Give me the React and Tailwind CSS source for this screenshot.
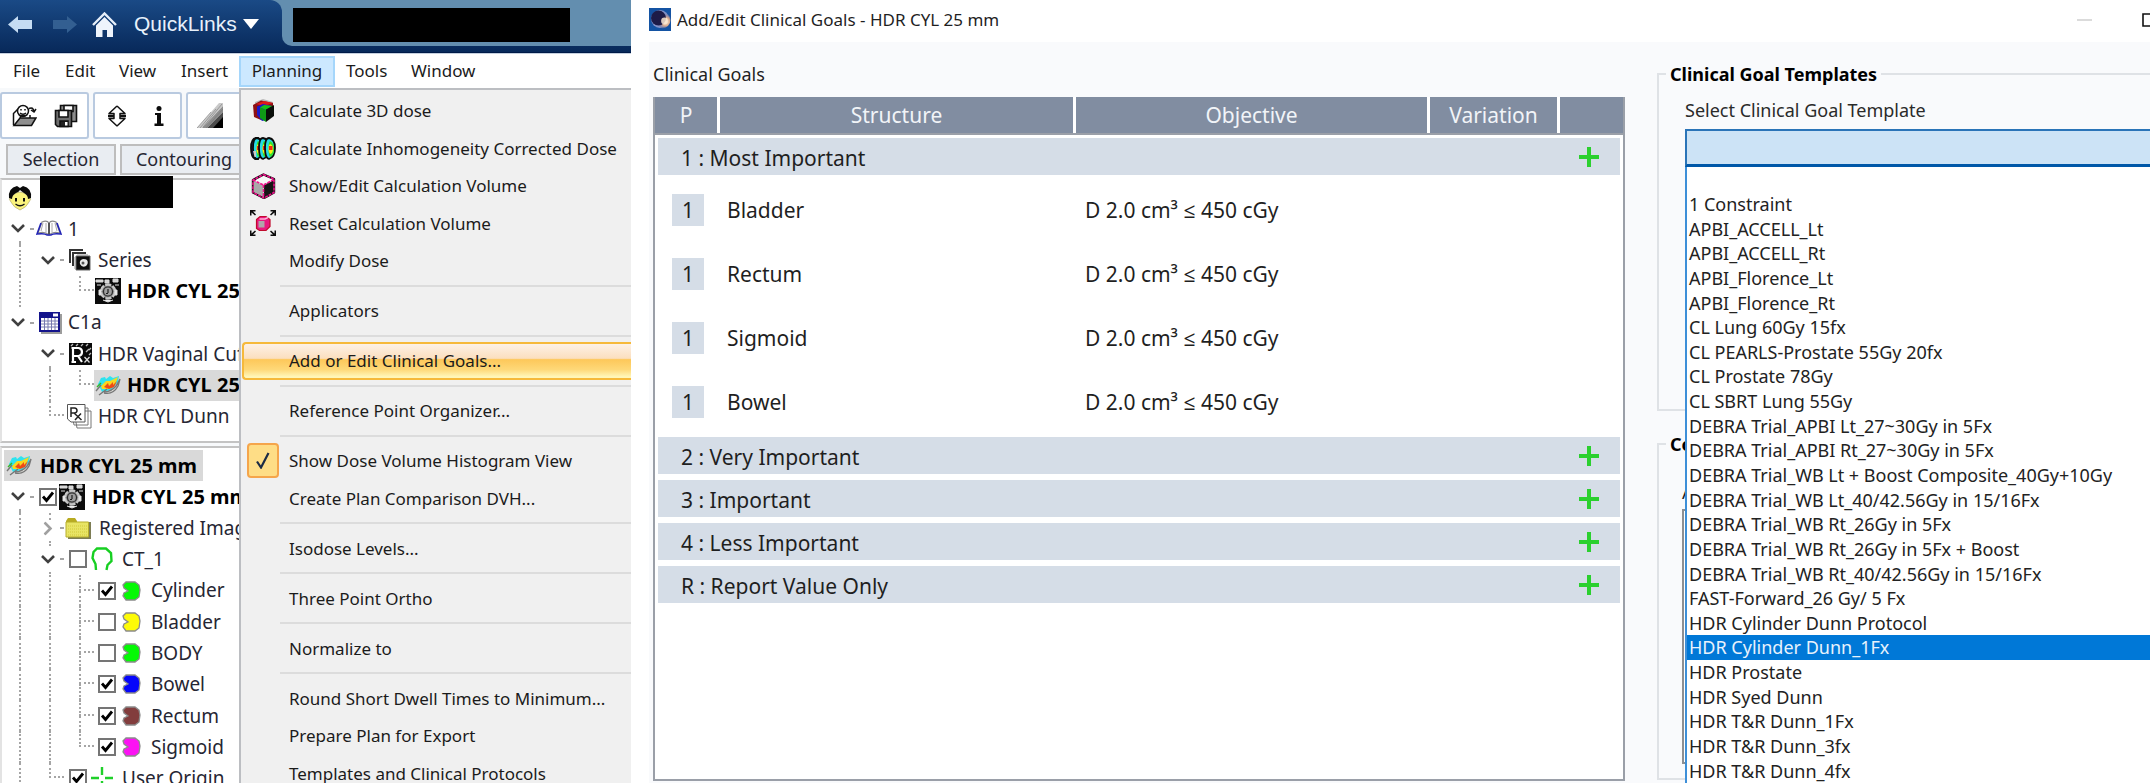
import React from "react";

/* ---------- icons ---------- */

function ArrowIcon({ flip, className }) {
  return (
    <svg viewBox="0 0 24 17" className={className} aria-hidden="true">
      <path d={flip ? "M24 8.5 14 0v4H0v9h14v4z" : "M0 8.5 10 0v4h14v9H10v4z"} fill="currentColor" />
    </svg>
  );
}

function HomeIcon() {
  return (
    <svg viewBox="0 0 25 25" className="h-[25px] w-[25px]" aria-hidden="true">
      <path d="M1 13 12.5 1.500 24 13" fill="none" stroke="#e6effa" strokeWidth="2.4" />
      <path d="M4 13.500 12.500 5 21 13.500V25H15V18H10.500V25H4z" fill="#eef4fc" />
    </svg>
  );
}

function OpenIcon() {
  return (
    <svg viewBox="0 0 25 24" className="h-6 w-[25px]" fill="none" stroke="#111" strokeWidth="1.5" aria-hidden="true">
      <path d="M1.500 21V9.500l4-4" />
      <circle cx="11" cy="7" r="5.5" fill="#fff" />
      <path d="M9 5v1.500M13 5v1.500M8 9q3 2.500 6 0" />
      <path d="M17 4.500q4-2 5 3M24 5l-2 3-3-2" />
      <path d="M2 21.500 8 14h16l-4.500 7.500z" fill="#8f8f8f" />
      <path d="M8.500 14v-2.500h5M18 14v-3" />
    </svg>
  );
}

function SaveAllIcon() {
  return (
    <svg viewBox="0 0 24 24" className="h-6 w-6" stroke="#111" strokeWidth="1.6" aria-hidden="true">
      <path d="M6.500 1.500h16v16h-16z" fill="#8b8b8b" />
      <path d="M10 1.500h9v6h-9z" fill="#fff" />
      <path d="M1.500 6.500h16v16h-14l-2-2z" fill="#6e6e6e" />
      <path d="M5 6.500h9v6.500H5z" fill="#fff" />
      <path d="M6 17h8v5.500H6z" fill="#222" />
      <path d="M11 18h2.500v3.500H11z" fill="#fff" stroke="none" />
    </svg>
  );
}

function MoveVerticalIcon() {
  return (
    <svg viewBox="0 0 20 22" className="h-[22px] w-5" fill="#fff" stroke="#111" strokeWidth="1.5" strokeLinejoin="round" aria-hidden="true">
      <path d="M10 1 2 8.500h5v2H1M10 1l8 7.500h-5v2h6" />
      <path d="M10 21 2 13.500h5v-2H1M10 21l8-7.500h-5v-2h6" />
    </svg>
  );
}

function InfoIcon() {
  return (
    <svg viewBox="0 0 10 20" className="h-5 w-[10px]" fill="#0d0d0d" aria-hidden="true">
      <circle cx="5" cy="2.6" r="2.5" />
      <path d="M1 7h6v10.500h2.500V20H.5v-2.500H3V9H1z" />
    </svg>
  );
}

function RampIcon() {
  return (
    <svg viewBox="0 0 26 26" className="h-[26px] w-[26px]" aria-hidden="true">
      <path d="M22 0 0 25h5L26 3V0z" fill="#c9c9c9" />
      <path d="M26 3 5 25h5L26 9z" fill="#8d8d8d" />
      <path d="M26 9 10 25h7l9-10z" fill="#4c4c4c" />
      <path d="M26 14 16 25h10z" fill="#000" />
      <path d="M14 9 0 25M19 6 3 25M25 1 6 24M26 6 9 25" stroke="#777" strokeWidth=".6" />
    </svg>
  );
}

function Dose3DIcon() {
  return (
    <svg viewBox="0 0 25 25" className="h-[25px] w-[25px]" aria-hidden="true">
      <path d="M4 4 12 1l10 3v4l-9-3-9 4z" fill="#b9b9b9" />
      <path d="M2 7 10 2.500 22 5v5L10 22 3 19z" fill="#8e1014" />
      <path d="M5 6 13 3l9 2-9 3z" fill="#e0191b" />
      <path d="M6 8.500 12 6l9 2-6 14-4 1-5-6z" fill="#1a1ac8" />
      <path d="M9 9.500 13 7l9 1-7 4z" fill="#17c317" />
      <path d="M9 9.500 15 12v12l-6-4z" fill="#0f9a16" />
      <path d="M15 11.500 23 7v11l-8 6z" fill="#0a0f0a" />
    </svg>
  );
}

function SlicesIcon() {
  const slice = (x) => (
    <g key={x} transform={`translate(${x} 0)`}>
      <path d="M5 2q6 1 6 10t-6 11q-4-1-4-11T5 2z" fill="#25d9ea" stroke="#0b0b0b" strokeWidth="1.8" />
      <path d="M6 5q4 2 4 8t-3.500 8q-2-1-2-8t1.500-8z" fill="#35e32c" />
      <path d="M6 8q3 1 3 5t-2.500 5q-2-1-2-5t1.500-5z" fill="#f8ee16" />
      <path d="M5 10h3.500v4H5z" fill="#f02a13" />
    </g>
  );
  return (
    <svg viewBox="0 0 26 25" className="h-[25px] w-[26px]" aria-hidden="true">
      <path d="M6 2Q1 3 1 12t4 11h3V2z" fill="#1b35d8" stroke="#0b0b0b" strokeWidth="1.8" />
      {[2, 8, 14].map(slice)}
      <path d="M3 15h3v6H4.500z" fill="#c9c9c9" />
    </svg>
  );
}

function VolumeBoxIcon() {
  return (
    <svg viewBox="0 0 25 26" className="h-[26px] w-[25px]" strokeLinejoin="round" aria-hidden="true">
      <path d="M12.500 1.500 23 6v13.500l-10 5.500L2 19.500V7z" fill="#f7f7f7" stroke="#0b0b0b" strokeWidth="2.4" />
      <path d="M2.500 8 12.500 12v12L2.500 19z" fill="#a9a9a9" />
      <path d="M13 12 23 7v12l-10 5.500z" fill="#151515" />
      <path d="M12.500 1.500 23 6v13.500l-10 5.500L2 19.500V7zM2 7l10.500 5L23 6.500M12.500 12v13" fill="none" stroke="#f0118c" strokeWidth="1.6" strokeDasharray="3 1" />
    </svg>
  );
}

function ResetVolumeIcon() {
  return (
    <svg viewBox="0 0 26 26" className="h-[26px] w-[26px]" aria-hidden="true">
      <path d="M6.500 9.500 10 6.500h6l4 3v7l-4 4H9.500l-3-2z" fill="#e9177f" stroke="#c00b2c" strokeWidth="1.2" />
      <path d="M8.500 11h6v6.500h-6z" fill="#b0a5aa" />
      <path d="M9.500 9h5.500l3-1.500" stroke="#ffb3d7" strokeWidth="1.4" fill="none" />
      <g fill="#0d0d0d">
        <path d="M0 0h5.500v1.500H3L6 4.500 5 5.500 1.500 2.500v3H0z" />
        <path d="M26 0h-5.500v1.500H23L20 4.500l1 1 3.500-3v3H26z" />
        <path d="M0 26h5.500v-1.500H3l3-3-1-1-3.500 3v-3H0z" />
        <path d="M26 26h-5.500v-1.500H23l-3-3 1-1 3.500 3v-3H26z" />
      </g>
    </svg>
  );
}

function PatientIcon() {
  return (
    <svg viewBox="0 0 24 26" className="h-[26px] w-6 shrink-0" aria-hidden="true">
      <path d="M3 12q-3 2 0 5 2 5 9 8 7-3 9-8 3-3 0-5-4-5-9-5t-9 5z" fill="#fbf47c" stroke="#b9b27c" strokeWidth=".8" />
      <path d="M1 13Q0 3 9 1l3 2 3-2q9 2 8 12l-3 1q0-4-4-6-3-2-4-3-1 2-4 3-4 2-4 6z" fill="#0a0a0a" />
      <path d="M8 13v3.500M16 13v3.500" stroke="#111" strokeWidth="2" />
      <path d="M7.500 19q4.500 3.500 9 0" stroke="#111" strokeWidth="1.3" fill="none" />
    </svg>
  );
}

function BookIcon() {
  return (
    <svg viewBox="0 0 26 17" className="h-[17px] w-[26px]" aria-hidden="true">
      <path d="M6 2q5-2 7 1 2-3 7-1l4 11q-7-2-11 2-4-4-11-2z" fill="#fff" stroke="#8a8a8a" strokeWidth="1.2" />
      <path d="M13 3v11" stroke="#555" strokeWidth="2" />
      <path d="M10 3v9M16 3v9M19 3l2 8M7 3 5 11" stroke="#aaa" strokeWidth="1" />
      <path d="M5 3 1 14q8-1 10 1h4q2-2 10-1L21 3" fill="none" stroke="#2224b5" strokeWidth="1.6" />
    </svg>
  );
}

function SeriesIcon() {
  return (
    <svg viewBox="0 0 22 22" className="h-[22px] w-[22px]" aria-hidden="true">
      <path d="M1 14V1h13M4 17V4h13" fill="none" stroke="#333" strokeWidth="2" />
      <path d="M7 7h14v14H7z" fill="#0d0d0d" stroke="#666" />
      <path d="M6 8v12M8 6h11" stroke="#999" strokeWidth="1" />
      <path d="M14 10q-4 1-3 5 2 4 6 2 3-3 1-6-1-1-4-1z" fill="#e9e9e9" />
      <circle cx="14" cy="14" r="1.5" fill="#555" />
    </svg>
  );
}

function CtIcon() {
  return (
    <svg viewBox="0 0 26 26" className="h-[26px] w-[26px]" aria-hidden="true">
      <path d="M0 0h26v26H0z" fill="#0c0c0c" />
      <path d="M1 2h7v2H1zM10 2h4v3h-4zM18 1h5v3h-5zM2 7h4M20 7h4" fill="#d5d5d5" stroke="#ddd" strokeWidth="1" />
      <circle cx="13" cy="13.5" r="7" fill="#7b7b7b" stroke="#c6c6c6" strokeWidth="2.4" strokeDasharray="6 1.5" />
      <circle cx="13" cy="13.5" r="4.5" fill="#9e9e9e" stroke="#2b2b2b" strokeWidth="1.2" />
      <path d="M13 11v4M11 15.500h2" stroke="#1d1d1d" strokeWidth="1.2" />
      <path d="M4 12h2v5H4zM20 12h2v5h-2zM8 22l5 2 5-2" fill="#eee" stroke="#ddd" />
    </svg>
  );
}

function CalendarIcon() {
  return (
    <svg viewBox="0 0 23 22" className="h-[22px] w-[23px]" aria-hidden="true">
      <path d="M2 2h21v20H2z" fill="#9c9c9c" />
      <path d="M0 0h21v20H0z" fill="#14148c" />
      <path d="M14 1.500h5v3h-5z" fill="#fff" />
      <path d="M2 6h17v12H2z" fill="#fff" />
      <path d="M5.500 6v12M9 6v12M12.500 6v12M16 6v12M2 9h17M2 12h17M2 15h17" stroke="#777ab0" strokeWidth="1" />
    </svg>
  );
}

function RxIcon() {
  return (
    <svg viewBox="0 0 23 22" className="h-[22px] w-[23px]" aria-hidden="true">
      <path d="M0 0h23v22H0z" fill="#0a0a0a" />
      <path d="M2 3l2-2M7 3l2-2M12 3l2-2M17 3l2-2M20 7l2-2M17 9l3-3M20 12l2-2" stroke="#bbb" strokeWidth="1.3" />
      <path d="M4 19V5h5.500q3.500.5 3.500 4t-3.500 4H5M9 13l4 6M2.500 19H7M2.500 5H5" fill="none" stroke="#fff" strokeWidth="2.2" />
      <path d="m15.500 14 5 5.500M20.500 14l-5 5.500" stroke="#ddd" strokeWidth="1.3" />
    </svg>
  );
}

function PlanIcon() {
  return (
    <svg viewBox="0 0 26 21" className="h-[21px] w-[26px] shrink-0" aria-hidden="true">
      <path d="M3 9 6 3l4-1 1 2 4-3 3 2 6-2-1 6-7 8-9 2z" fill="#2fe3ee" />
      <path d="M6 11 11 6h4l8-4-3 8-6 4H7z" fill="#f9d61f" />
      <path d="m9 12 4-4 1 3 4-4v3l4-4-3 6-5 2z" fill="#ee4a17" />
      <path d="M12 17q7-2 11-9l1-2-2 6q-4 7-10 6z" fill="#e6e6e0" />
      <path d="M1 16 6 10M4 20l8-6M9 17q7 0 12-6l4-7-2 7q-5 9-14 7" fill="none" stroke="#777" strokeWidth="1.4" />
      <path d="M2 12 6 8" stroke="#37b52d" strokeWidth="1.4" />
    </svg>
  );
}

function RxSheetsIcon() {
  return (
    <svg viewBox="0 0 25 25" className="h-[25px] w-[25px]" aria-hidden="true">
      <path d="M7 7h17v17H10zM4 4h17v17H7z" fill="#fff" stroke="#777" />
      <path d="M.5.500h17.500v17.500H4L.5 15z" fill="#fff" stroke="#555" />
      <path d="M4 13V4h3.500q2.500.2 2.500 2.500T7.500 9H4M7 9l7.500 7M14 9.500l-6 6.500" fill="none" stroke="#222" strokeWidth="1.5" />
    </svg>
  );
}

function FolderIcon() {
  return (
    <svg viewBox="0 0 26 21" className="h-[21px] w-[26px]" aria-hidden="true">
      <path d="M3 4h23v17H3z" fill="#7d7d55" />
      <path d="M1 3 3 0h7l2 3v3H1z" fill="#b8ab21" />
      <path d="M1 4h22.500v15H1z" fill="#e8e465" stroke="#b6ad2b" strokeWidth="1" />
      <path d="M3 8h19M3 11h19M3 14h19M3 17h19" stroke="#d2c93b" strokeWidth="1" strokeDasharray="1 1" />
    </svg>
  );
}

function ContourIcon() {
  return (
    <svg viewBox="0 0 22 24" className="h-6 w-[22px]" aria-hidden="true">
      <path d="M5 23 4.500 17 1.500 11 2.500 5 6 1.500h9L20 6l.5 8-4 4-1 5" fill="none" stroke="#17cf22" strokeWidth="2.4" />
    </svg>
  );
}

function StructureIcon({ color }) {
  return (
    <svg viewBox="0 0 19 20" className="h-5 w-[19px]" aria-hidden="true">
      <path d="M4 1h9l4 3 1 5-1 7-4 3H4l-3-4 1-3 4-2-4-3-1-3z" fill={color} stroke="#8b8b8b" strokeWidth="1.3" />
    </svg>
  );
}

function OriginIcon() {
  return (
    <svg viewBox="0 0 22 22" className="h-[22px] w-[22px]" aria-hidden="true">
      <path d="M11 0v8M11 14v8M0 11h8M14 11h8" stroke="#1fd02a" strokeWidth="2.4" />
    </svg>
  );
}

function EclipseIcon() {
  return (
    <svg viewBox="0 0 22 23" className="h-[23px] w-[22px] shrink-0" aria-hidden="true">
      <defs>
        <radialGradient id="flare" cx=".72" cy=".6" r=".5">
          <stop offset="0" stopColor="#fff6df" />
          <stop offset=".5" stopColor="#d9a98c" />
          <stop offset="1" stopColor="#5a6aa8" stopOpacity="0" />
        </radialGradient>
      </defs>
      <path d="M0 0h22v23H0z" fill="#1453a3" />
      <circle cx="11" cy="11" r="9" fill="#8492c8" />
      <circle cx="13" cy="12" r="8.5" fill="url(#flare)" />
      <circle cx="9.5" cy="10" r="7.5" fill="#1d1b48" />
      <circle cx="15.5" cy="13" r="3.4" fill="#fbe9d2" opacity=".85" />
    </svg>
  );
}

/* ---------- tree ---------- */

function Chevron({ open = true }) {
  return (
    <svg viewBox="0 0 14 9" className={open ? "h-[9px] w-[14px]" : "h-[9px] w-[14px] -rotate-90"} aria-hidden="true">
      <path d="m1 1 6 6 6-6" fill="none" stroke={open ? "#404040" : "#a0a0a0"} strokeWidth="2.6" />
    </svg>
  );
}

/* One 30px indent column of a row: line, elbow, last elbow, expander or blank. */
function Guide({ kind }) {
  if (kind === "open" || kind === "openline" || kind === "closed") {
    return (
      <span className="grid h-full w-[30px] shrink-0 grid-rows-[1fr_auto_1fr]">
        <span className={kind === "closed" ? "mb-1 ml-[15px] border-l-2 border-dotted border-[#a5a5a5]" : ""} />
        <span className="flex items-center justify-between pl-[7px]">
          <Chevron open={kind !== "closed"} />
          <span className="w-1 border-b-2 border-dotted border-[#a5a5a5]" />
        </span>
        <span className={kind === "open" ? "" : "ml-[15px] mt-2 border-l-2 border-dotted border-[#a5a5a5]"} />
      </span>
    );
  }
  if (kind === "line") {
    return (
      <span className="h-full w-[30px] shrink-0 pl-[15px]">
        <span className="block h-full border-l-2 border-dotted border-[#a5a5a5]" />
      </span>
    );
  }
  if (kind === "tee" || kind === "end") {
    return (
      <span className="grid h-full w-[30px] shrink-0 grid-rows-2 pl-[15px]">
        <span className="border-b-2 border-l-2 border-dotted border-[#a5a5a5]" />
        <span className={kind === "tee" ? "border-l-2 border-dotted border-[#a5a5a5]" : ""} />
      </span>
    );
  }
  return <span className="h-full w-[30px] shrink-0" />;
}

function TreeCheck({ checked, id }) {
  return (
    <span className="grid shrink-0">
      <input
        id={id}
        type="checkbox"
        defaultChecked={checked}
        className="peer col-start-1 row-start-1 h-[18px] w-[18px] appearance-none border-2 border-[#757575] bg-white"
      />
      <svg viewBox="0 0 18 18" className="pointer-events-none invisible col-start-1 row-start-1 h-[18px] w-[18px] peer-checked:visible" aria-hidden="true">
        <path d="m4 8.500 3.500 4L14 4.500" fill="none" stroke="#000" strokeWidth="2.8" />
      </svg>
    </span>
  );
}

const PLANS = [
  { guides: ["openline"], icon: <BookIcon />, box: "w-[26px] ml-[2px]", label: "1" },
  { guides: ["line", "open"], icon: <SeriesIcon />, box: "w-6 ml-1", label: "Series" },
  { guides: ["line", "blank", "end"], icon: <CtIcon />, box: "w-[26px] ml-[1px]", label: "HDR CYL 25 mm", bold: true },
  { guides: ["open"], icon: <CalendarIcon />, box: "w-6 ml-1", label: "C1a" },
  { guides: ["blank", "openline"], icon: <RxIcon />, box: "w-6 ml-1", label: "HDR Vaginal Cuff" },
  { guides: ["blank", "line", "end"], icon: <PlanIcon />, box: "w-[26px] ml-[1px]", label: "HDR CYL 25 mm", bold: true, selected: true },
  { guides: ["blank", "end"], icon: <RxSheetsIcon />, box: "w-[26px] ml-[2px]", label: "HDR CYL Dunn" },
];

const STRUCTURES = [
  { name: "Cylinder", color: "#05f905", on: true },
  { name: "Bladder", color: "#fdfb07", on: false },
  { name: "BODY", color: "#05f905", on: false },
  { name: "Bowel", color: "#0505fb", on: true },
  { name: "Rectum", color: "#823d3d", on: true },
  { name: "Sigmoid", color: "#fb12f3", on: true },
];

function PlanTree() {
  return (
    <ul className="flex h-[250px] flex-col">
      <li className="flex min-h-0 flex-1 items-center pl-[6px]">
        <PatientIcon />
        <span className="-mt-[6px] ml-2 h-8 w-[133px] self-start bg-black" />
      </li>
      {PLANS.map((row, i) => (
        <li key={i} className="flex min-h-0 flex-1 items-center whitespace-nowrap pl-[2px]">
          {row.guides.map((g, j) => (
            <Guide key={j} kind={g} />
          ))}
          <span className={`flex h-full grow items-center gap-[6px] ${row.selected ? "bg-[#d9d9d9]" : ""}`}>
            <span className={`flex shrink-0 justify-center ${row.box}`}>{row.icon}</span>
            <span className={row.bold ? "text-[20px] font-bold text-black" : ""}>{row.label}</span>
          </span>
        </li>
      ))}
    </ul>
  );
}

function StructureTree() {
  const li = "flex min-h-0 flex-1 items-center whitespace-nowrap pl-[2px]";
  return (
    <ul className="-mb-[11px] flex min-h-0 flex-1 flex-col">
      <li className="flex min-h-0 flex-1 items-center pl-[2px]">
        <span className="flex h-full items-center gap-2 bg-[#d9d9d9] pl-[2px] pr-[6px] text-[20px] font-bold text-black">
          <PlanIcon />
          HDR CYL 25 mm
        </span>
      </li>
      <li className={li}>
        <Guide kind="openline" />
        <span className="ml-[5px] flex items-center">
          <TreeCheck id="ct" checked />
          <span className="ml-[2px]"><CtIcon /></span>
          <label htmlFor="ct" className="ml-[7px] text-[20px] font-bold text-black">HDR CYL 25 mm</label>
        </span>
      </li>
      <li className={li}>
        <Guide kind="line" />
        <Guide kind="closed" />
        <span className="ml-[1px]"><FolderIcon /></span>
        <span className="ml-2">Registered Images</span>
      </li>
      <li className={li}>
        <Guide kind="line" />
        <Guide kind="openline" />
        <span className="ml-[5px] flex items-center">
          <TreeCheck id="ct1" />
          <span className="ml-[4px]"><ContourIcon /></span>
          <label htmlFor="ct1" className="ml-[9px]">CT_1</label>
        </span>
      </li>
      {STRUCTURES.map((s, i) => (
        <li key={s.name} className={li}>
          <Guide kind="line" />
          <Guide kind="line" />
          <Guide kind={i === STRUCTURES.length - 1 ? "end" : "tee"} />
          <span className="ml-[4px] flex items-center">
            <TreeCheck id={s.name} checked={s.on} />
            <span className="ml-[6px]"><StructureIcon color={s.color} /></span>
            <label htmlFor={s.name} className="ml-[10px]">{s.name}</label>
          </span>
        </li>
      ))}
      <li className={li}>
        <Guide kind="line" />
        <Guide kind="end" />
        <span className="ml-[5px] flex items-center">
          <TreeCheck id="origin" checked />
          <span className="ml-[4px]"><OriginIcon /></span>
          <label htmlFor="origin" className="ml-[9px]">User Origin</label>
        </span>
      </li>
    </ul>
  );
}

/* ---------- planning menu ---------- */

const MENU = [
  { label: "Calculate 3D dose", icon: <Dose3DIcon /> },
  { label: "Calculate Inhomogeneity Corrected Dose", icon: <SlicesIcon /> },
  { label: "Show/Edit Calculation Volume", icon: <VolumeBoxIcon /> },
  { label: "Reset Calculation Volume", icon: <ResetVolumeIcon /> },
  { label: "Modify Dose" },
  null,
  { label: "Applicators" },
  null,
  { label: "Add or Edit Clinical Goals...", active: true },
  null,
  { label: "Reference Point Organizer..." },
  null,
  { label: "Show Dose Volume Histogram View", checked: true },
  { label: "Create Plan Comparison DVH..." },
  null,
  { label: "Isodose Levels..." },
  null,
  { label: "Three Point Ortho" },
  null,
  { label: "Normalize to" },
  null,
  { label: "Round Short Dwell Times to Minimum..." },
  { label: "Prepare Plan for Export" },
  { label: "Templates and Clinical Protocols" },
];

function PlanningMenu() {
  return (
    <div
      role="menu"
      className="absolute -bottom-[9px] left-[239px] right-0 top-0 flex flex-col border-l-2 border-t-2 border-[#bcbec2] bg-[#f0f0f0] pt-[2px] text-[17px] text-[#1b1b1b]"
    >
      {MENU.map((m, i) =>
        m === null ? (
          <div key={i} role="separator" className="flex min-h-0 flex-[1_1_0%] items-center pl-[39px]">
            <span className="w-full border-t-2 border-[#dcdcdc]" />
          </div>
        ) : (
          <button key={i} type="button" role="menuitem" className="flex min-h-0 flex-[3_3_0%] whitespace-nowrap text-left">
            {m.active ? (
              <span className="ml-[1px] flex h-full grow items-center rounded-l-[4px] border-2 border-r-0 border-[#f6b93b] bg-[linear-gradient(to_bottom,#fdf1e6_0%,#fbdfbf_42%,#fdc85a_46%,#fed878_75%,#fff6b8_96%)] pl-[45px]">
                {m.label}
              </span>
            ) : (
              <span className="flex h-full grow items-center">
                <span className="flex w-12 shrink-0 justify-center pr-1">
                  {m.icon}
                  {m.checked && (
                    <span className="flex h-[35px] w-8 items-center justify-center rounded-[4px] border-2 border-[#f5a54b] bg-[#fedd86]">
                      <svg viewBox="0 0 14 17" className="h-[17px] w-[14px]" aria-hidden="true">
                        <path d="m1 9.500 4 6L12.500 1" fill="none" stroke="#1c2b45" strokeWidth="2.2" />
                      </svg>
                    </span>
                  )}
                </span>
                {m.label}
              </span>
            )}
          </button>
        )
      )}
    </div>
  );
}

function PlanningApp() {
  const group = "flex items-center rounded-[3px] border-2 border-[#b9cae0] bg-white";
  return (
    <section className="flex w-[631px] shrink-0 flex-col overflow-hidden bg-white text-[19px] text-[#262633]">
      <header className="flex h-[53px] shrink-0 border-b border-[#001a48]">
        <div className="w-[282px] shrink-0 bg-[#638eaf]">
          <div className="flex h-full items-center rounded-tr-[12px] bg-linear-to-b from-[#1a4a86] to-[#08295a] pb-1 pl-2 text-white">
            <button type="button" aria-label="Back" className="text-[#c5dcf3]"><ArrowIcon className="h-[17px] w-6" /></button>
            <button type="button" aria-label="Forward" className="ml-[21px] text-[#335f91]"><ArrowIcon flip className="h-[17px] w-6" /></button>
            <button type="button" aria-label="Home" className="ml-[15px]"><HomeIcon /></button>
            <button type="button" className="ml-[17px] flex items-center gap-[6px] font-['Liberation_Sans',sans-serif] text-[21px] leading-6 text-[#e8f1fb]">
              QuickLinks
              <svg viewBox="0 0 16 10" className="h-[10px] w-4" aria-hidden="true"><path d="M0 0h16L8 10z" fill="#fff" /></svg>
            </button>
          </div>
        </div>
        <div className="flex-1 bg-linear-to-b from-[#1a4a86] to-[#08295a] pb-[6px]">
          <div className="h-full rounded-bl-[10px] bg-[#638eaf] pl-[11px] pt-2">
            <div className="h-[34px] w-[277px] bg-black" />
          </div>
        </div>
      </header>

      <nav className="flex h-[35px] shrink-0 items-center border-t border-[#c5d0df] text-[17px] text-[#1b1b1b]">
        <button type="button" className="w-[52px] pl-[13px] text-left">File</button>
        <button type="button" className="w-[55px] pl-[13px] text-left">Edit</button>
        <button type="button" className="w-[62px] pl-[12px] text-left">View</button>
        <button type="button" className="w-[70px] pl-[12px] text-left">Insert</button>
        <button type="button" className="h-[31px] w-24 border-2 border-[#a5d6fb] bg-[#cce8ff]">Planning</button>
        <button type="button" className="w-[63px] pl-[11px] text-left">Tools</button>
        <button type="button" className="w-[90px] pl-[13px] text-left">Window</button>
      </nav>

      <div className="relative flex min-h-0 flex-1 flex-col">
        <div className="flex min-h-0 w-[240px] flex-1 flex-col overflow-hidden bg-[#f7f9fb]">
          <div className="flex h-[51px] shrink-0 gap-1 pt-1">
            <div className={`${group} w-[89px] shrink-0 justify-between pl-[10px] pr-[9px]`}>
              <button type="button" aria-label="Open patient"><OpenIcon /></button>
              <button type="button" aria-label="Save all"><SaveAllIcon /></button>
            </div>
            <div className={`${group} w-[89px] shrink-0 justify-between pl-[12px] pr-[16px]`}>
              <button type="button" aria-label="Move"><MoveVerticalIcon /></button>
              <button type="button" aria-label="Information"><InfoIcon /></button>
            </div>
            <div className={`${group} w-[100px] shrink-0 pl-[9px]`}>
              <button type="button" aria-label="Window level"><RampIcon /></button>
            </div>
          </div>
          <div className="mt-[5px] flex h-[31px] shrink-0 gap-1 pl-[6px] text-[18px]">
            <button type="button" className="w-[110px] shrink-0 border-2 border-[#bdbdbd] bg-[#e9edf2]">Selection</button>
            <button type="button" className="w-32 shrink-0 border-2 border-[#bdbdbd] bg-[#e9edf2]">Contouring</button>
          </div>
          <div className="mt-[3px] shrink-0 border-2 border-r-0 border-[#c3c3c3] border-l-[#e3e3e3] bg-white pb-[9px] pt-[2px]">
            <PlanTree />
          </div>
          <div className="mt-[3px] flex min-h-0 flex-1 flex-col border-l-2 border-t-2 border-[#c3c3c3] border-l-[#e3e3e3] bg-white pt-[2px]">
            <StructureTree />
          </div>
        </div>
        <PlanningMenu />
      </div>
    </section>
  );
}

/* ---------- clinical goals dialog ---------- */

const GROUPS = [
  { label: "1 : Most Important", goals: ["Bladder", "Rectum", "Sigmoid", "Bowel"] },
  { label: "2 : Very Important", goals: [] },
  { label: "3 : Important", goals: [] },
  { label: "4 : Less Important", goals: [] },
  { label: "R : Report Value Only", goals: [] },
];

function GoalsTable() {
  const th = "border-r-[3px] border-white p-0 font-normal";
  return (
    <div className="min-h-0 flex-1 overflow-hidden border-2 border-t-0 border-[#9a9fa8] bg-white">
      <table className="w-full table-fixed border-separate border-spacing-0 text-[21px] leading-7 text-[#1f1f1f]">
        <thead>
          <tr className="h-[36px] bg-[#818da1] text-[#f1f4f8]">
            <th className={`${th} w-[65px]`}>P</th>
            <th className={`${th} w-[356px]`}>Structure</th>
            <th className={th}>Objective</th>
            <th className={`${th} w-[130px]`}>Variation</th>
            <th className="w-[63px] p-0" aria-label="Add" />
          </tr>
        </thead>
        {GROUPS.map((g, gi) => (
          <tbody key={g.label}>
            <tr>
              <th colSpan={5} className={`p-0 text-left font-normal ${gi === 0 ? "border-t-2 border-[#9a9fa8]" : ""}`}>
                <div className="mx-[3px] my-[3px] flex h-[37px] items-center justify-between bg-[#d5dde7] pl-[23px] pr-[21px] pt-[2px]">
                  {g.label}
                  <button type="button" aria-label={`Add goal to ${g.label}`} className="pb-[2px]">
                    <svg viewBox="0 0 20 20" className="h-5 w-5" aria-hidden="true">
                      <path d="M10 0v20M0 10h20" stroke="#2bd02f" strokeWidth="4" />
                    </svg>
                  </button>
                </div>
              </th>
            </tr>
            {g.goals.map((name) => (
              <tr key={name} className="h-16">
                <td className="py-0 pl-[17px] pr-0">
                  <span className="flex h-8 w-8 items-center justify-center bg-[#d5dde7]">1</span>
                </td>
                <td className="py-0 pl-[7px] pr-0">{name}</td>
                <td className="py-0 pl-[9px] pr-0">D 2.0 cm³ ≤ 450 cGy</td>
                <td />
                <td />
              </tr>
            ))}
          </tbody>
        ))}
      </table>
    </div>
  );
}

const TEMPLATES = [
  "",
  "1 Constraint",
  "APBI_ACCELL_Lt",
  "APBI_ACCELL_Rt",
  "APBI_Florence_Lt",
  "APBI_Florence_Rt",
  "CL Lung 60Gy 15fx",
  "CL PEARLS-Prostate 55Gy 20fx",
  "CL Prostate 78Gy",
  "CL SBRT Lung 55Gy",
  "DEBRA Trial_APBI Lt_27~30Gy in 5Fx",
  "DEBRA Trial_APBI Rt_27~30Gy in 5Fx",
  "DEBRA Trial_WB Lt + Boost Composite_40Gy+10Gy",
  "DEBRA Trial_WB Lt_40/42.56Gy in 15/16Fx",
  "DEBRA Trial_WB Rt_26Gy in 5Fx",
  "DEBRA Trial_WB Rt_26Gy in 5Fx + Boost",
  "DEBRA Trial_WB Rt_40/42.56Gy in 15/16Fx",
  "FAST-Forward_26 Gy/ 5 Fx",
  "HDR Cylinder Dunn Protocol",
  "HDR Cylinder Dunn_1Fx",
  "HDR Prostate",
  "HDR Syed Dunn",
  "HDR T&R Dunn_1Fx",
  "HDR T&R Dunn_3fx",
  "HDR T&R Dunn_4fx",
];

function TemplatesPane() {
  const box = "-mr-4 flex min-h-0 min-w-0 flex-1 flex-col border-2 border-[#dfe2e6] pl-[26px]";
  const legend = "-ml-[19px] px-[4px] text-[18px] font-bold leading-6 text-black";
  return (
    <div className="relative flex w-[493px] shrink-0 flex-col gap-[21px] pb-[3px] pt-5 text-[18px]">
      <fieldset className={box}>
        <legend className={legend}>Clinical Goal Templates</legend>
        <label htmlFor="template" className="mt-[12px] block leading-6 text-[#2a2a2a]">Select Clinical Goal Template</label>
        <select
          id="template"
          className="mt-[7px] block h-[38px] w-full appearance-none border-2 border-b-[3px] border-[#2a74b8] border-b-[#0058a8] bg-[#cce3f6]"
        >
          <option />
        </select>
      </fieldset>
      <fieldset className={box}>
        <legend className={legend}>Co</legend>
        <span className="-ml-[3px] mt-6 block leading-6">A</span>
        <div className="-ml-[3px] mt-[5px] h-[255px] border-2 border-[#8d8f93] bg-white" />
      </fieldset>
      <ul
        role="listbox"
        aria-label="Clinical goal templates"
        className="absolute bottom-0 left-[28px] right-0 top-[125px] grid auto-rows-fr border-l-2 border-[#3d8fd8] bg-white text-[#222]"
      >
        {TEMPLATES.map((t) => (
          <li
            key={t}
            role="option"
            aria-selected={t === "HDR Cylinder Dunn_1Fx"}
            className="flex min-h-0 items-center whitespace-nowrap pl-[2px] leading-6 aria-selected:bg-[#0078d7] aria-selected:text-[#e8f2fc]"
          >
            {t}
          </li>
        ))}
      </ul>
    </div>
  );
}

function GoalsDialog() {
  return (
    <section className="ml-[18px] flex min-w-0 flex-1 flex-col overflow-hidden bg-[#f9fafc] text-[#1f1f1f]">
      <header className="flex h-[42px] shrink-0 items-center bg-white pb-[3px]">
        <EclipseIcon />
        <h1 className="ml-[6px] text-[17px]">Add/Edit Clinical Goals - HDR CYL 25 mm</h1>
        <button type="button" aria-label="Minimize" className="-mr-2 ml-auto shrink-0">
          <svg viewBox="0 0 15 14" className="h-[14px] w-[15px]" aria-hidden="true"><path d="M0 7h15" stroke="#cfcfcf" strokeWidth="1.5" /></svg>
        </button>
        <button type="button" aria-label="Maximize" className="-mr-[7px] ml-[58px] shrink-0">
          <svg viewBox="0 0 15 14" className="h-[14px] w-[15px]" aria-hidden="true"><path d="M1 1h13v12H1z" fill="none" stroke="#111" strokeWidth="1.6" /></svg>
        </button>
      </header>
      <div className="flex min-h-0 flex-1">
        <div className="mr-[32px] flex min-w-0 flex-1 flex-col pb-[2px] pl-1 pt-5">
          <h2 className="mb-[11px] text-[18px] leading-6">Clinical Goals</h2>
          <GoalsTable />
        </div>
        <TemplatesPane />
      </div>
    </section>
  );
}

export default function App() {
  return (
    <main className="flex h-screen min-h-[600px] overflow-hidden bg-white font-['Noto_Sans','Open_Sans',sans-serif]">
      <PlanningApp />
      <GoalsDialog />
    </main>
  );
}
